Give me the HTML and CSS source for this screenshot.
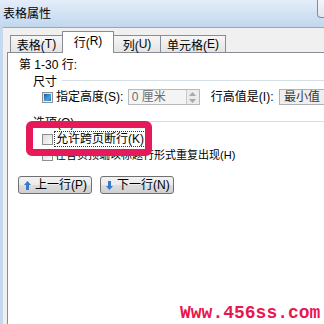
FILE: index.html
```html
<!DOCTYPE html>
<html lang="zh-CN">
<head>
    <meta charset="UTF-8">
    <title>表格属性</title>
    <link rel="stylesheet" href="styles.css">
</head>
<body>
    <div class="titlebar">
        <span class="title">表格属性</span>
        <span class="winbtn"></span>
    </div>
    <div class="client">
        <div class="tabs">
            <div class="tab t1">表格(<u>T</u>)</div>
            <div class="tab t2 active">行(<u>R</u>)</div>
            <div class="tab t3">列(<u>U</u>)</div>
            <div class="tab t4">单元格(<u>E</u>)</div>
        </div>
        <div class="panel">
            <div class="rowtitle">第 1-30 行:</div>

            <div class="group">
                <span>尺寸</span>
                <i class="rule"></i>
            </div>
            <div class="size-row">
                <span class="check mixed"></span>
                <span class="lbl lbl1">指定高度(<u>S</u>):</span>
                <span class="spin">
                    <span class="field">0 厘米</span>
                    <span class="arrows">
                        <svg width="7" height="4" viewBox="0 0 7 4"><polygon points="0,4 3.5,0 7,4" fill="#a8a8a8"/></svg>
                        <svg width="7" height="4" viewBox="0 0 7 4"><polygon points="0,0 7,0 3.5,4" fill="#a8a8a8"/></svg>
                    </span>
                </span>
                <span class="lbl lbl2">行高值是(<u>I</u>):</span>
                <span class="combo">最小值</span>
            </div>

            <div class="group group2">
                <span>选项(<u>O</u>)</span>
                <i class="rule"></i>
            </div>
            <div class="opt">
                <span class="check"></span>
                <span class="focus">允许跨页断行(<u>K</u>)</span>
            </div>
            <div class="opt opt2">
                <span class="check"></span>
                <span class="text">在各页顶端以标题行形式重复出现(<u>H</u>)</span>
            </div>

            <div class="nav">
                <button class="btn">
                    <svg width="7" height="9" viewBox="0 0 7 9"><polygon points="3.5,0 7,4 5,4 5,9 2,9 2,4 0,4" fill="#3778cf"/></svg>
                    <span>上一行(<u>P</u>)</span>
                </button>
                <button class="btn">
                    <svg width="7" height="9" viewBox="0 0 7 9"><polygon points="2,0 5,0 5,5 7,5 3.5,9 0,5 2,5" fill="#3778cf"/></svg>
                    <span>下一行(<u>N</u>)</span>
                </button>
            </div>
        </div>
    </div>

    <div class="highlight"></div>
    <div class="mark">Www.456ss.com</div>
</body>
</html>
```

FILE: styles.css
```css
*{
    box-sizing: border-box;
}
body{
    margin: 0;
    width: 324px;
    height: 324px;
    overflow: hidden;
    position: relative;
    background-color: #c4d8ee;
    font-family: "Liberation Sans", "Noto Sans CJK SC", sans-serif;
    font-size: 12px;
    color: #000;
}
u{
    text-decoration: none;
}

/* window frame */
.titlebar{
    height: 27px;
    display: flex;
    align-items: center;
    padding-left: 3px;
    background: linear-gradient(#e3edf8, #c2d7ee);
}
.title{
    line-height: 14px;
}
.winbtn{
    margin-left: auto;
    align-self: flex-start;
    width: 7px;
    height: 18px;
    border: 1px solid #7d8ea3;
    border-top: none;
    border-right: none;
    border-radius: 0 0 0 4px;
    background: linear-gradient(#f3f6fa, #dfe6ee);
}
.client{
    margin-left: 3px;
    height: 297px;
    background-color: #f0f0f0;
    border-top: 1px solid #97a8bc;
    padding-top: 3px;
    padding-left: 4px;
}

/* tabs */
.tabs{
    height: 21px;
    display: flex;
    align-items: flex-end;
    padding-left: 3px;
}
.tab{
    height: 17px;
    display: flex;
    align-items: center;
    justify-content: center;
    white-space: nowrap;
    border: 1px solid #898c95;
    border-bottom: none;
    margin-left: -1px;
    background: linear-gradient(#f6f6f6, #e4e4e4);
}
.t1{ width: 53px; margin-left: 0; }
.t2{ width: 52px; }
.t3{ width: 48px; }
.t4{ width: 66px; }
.tab.active{
    height: 22px;
    margin-bottom: -1px;
    position: relative;
    z-index: 1;
    background: #fff;
    padding-bottom: 3px;
}

.panel{
    height: 280px;
    background-color: #fff;
    border-top: 1px solid #898c95;
    border-left: 1px solid #898c95;
}

.rowtitle{
    margin-top: 5px;
    padding-left: 11px;
    line-height: 14px;
}
.group{
    height: 14px;
    margin-top: 1px;
    padding-left: 25px;
    display: flex;
    align-items: center;
}
.group .rule{
    flex: 1;
    height: 1px;
    margin-left: 5px;
    background-color: #d5dfe5;
}
.group2{
    margin-top: 9px;
}

/* checkbox */
.check{
    width: 11px;
    height: 11px;
    flex: none;
    border: 1px solid #8e8f8f;
    background: linear-gradient(135deg, #dcdcdc, #fbfbfb);
    display: flex;
    align-items: center;
    justify-content: center;
}
.check.mixed::after{
    content: "";
    width: 7px;
    height: 7px;
    background: linear-gradient(135deg, #1c5a97, #4aa0dc 60%, #2d7cc0);
}

.size-row{
    height: 16px;
    margin-top: 2px;
    padding-left: 34px;
    display: flex;
    align-items: center;
    white-space: nowrap;
}
.size-row .check{
    margin-right: 2px;
}
.lbl{
    line-height: 14px;
    padding-left: 1px;
}
.lbl1{ width: 78px; }
.lbl2{ width: 74px; margin-left: 10px; }
.spin{
    width: 72px;
    height: 16px;
    flex: none;
    display: flex;
    border: 1px solid #b5b9bd;
    background-color: #f4f4f4;
}
.field{
    flex: 1;
    padding-left: 3px;
    line-height: 14px;
    color: #6d6d6d;
}
.arrows{
    width: 13px;
    border-left: 1px solid #c9c9c9;
    background-color: #ececec;
    display: flex;
    flex-direction: column;
    align-items: center;
    justify-content: space-around;
}
.combo{
    width: 45px;
    height: 16px;
    flex: none;
    padding-left: 4px;
    line-height: 14px;
    border: 1px solid #adb2b5;
    border-right: none;
    background-color: #efefef;
    color: #333;
    overflow: hidden;
}

.opt{
    height: 16px;
    margin-top: 3px;
    padding-left: 34px;
    display: flex;
    align-items: center;
    white-space: nowrap;
}
.opt .check{
    margin-right: 1px;
}
.focus{
    height: 16px;
    padding: 0 1px;
    line-height: 14px;
    border: 1px dotted #333;
}
.opt2{
    margin-top: 0;
}
.opt2 .check{
    margin-right: 2px;
}
.opt2 .text{
    font-size: 11px;
    line-height: 14px;
}

/* next / previous */
.nav{
    margin-top: 13px;
    padding-left: 10px;
    display: flex;
    gap: 8px;
}
.btn{
    width: 74px;
    height: 18px;
    padding: 0 0 0 5px;
    display: flex;
    align-items: center;
    gap: 4px;
    white-space: nowrap;
    font: inherit;
    line-height: 14px;
    color: #000;
    border: 1px solid #707070;
    border-radius: 3px;
    background: linear-gradient(#f2f2f2 0%, #ebebeb 50%, #dddddd 51%, #cfcfcf 100%);
}
.btn svg{
    flex: none;
}

/* overlays on the screenshot */
.highlight{
    position: absolute;
    left: 26px;
    top: 121px;
    width: 126px;
    height: 35px;
    border: 7px solid #e61a5a;
    border-radius: 6px;
}
.mark{
    position: absolute;
    left: 180px;
    top: 304px;
    font-family: "Liberation Mono", monospace;
    font-weight: bold;
    font-size: 18px;
    line-height: 18px;
    color: #e8174f;
}
```
